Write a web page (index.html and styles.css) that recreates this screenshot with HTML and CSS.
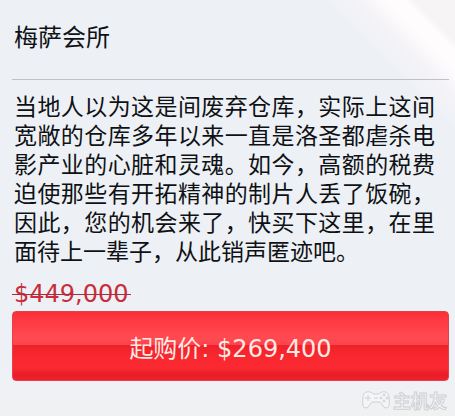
FILE: index.html
```html
<!DOCTYPE html>
<html lang="zh-CN">
<head>
<meta charset="utf-8">
<meta name="viewport" content="width=device-width, initial-scale=1">
<title>梅萨会所</title>
<link rel="stylesheet" href="styles.css">
</head>
<body>
<main class="listing">
  <h1 class="title">梅萨会所</h1>
  <p class="description">当地人以为这是间废弃仓库，实际上这间宽敞的仓库多年以来一直是洛圣都虐杀电影产业的心脏和灵魂。如今，高额的税费迫使那些有开拓精神的制片人丢了饭碗，因此，您的机会来了，快买下这里，在里面待上一辈子，从此销声匿迹吧。</p>
  <div class="old-price"><del>$449,000</del></div>
  <button class="buy" type="button">起购价: $269,400</button>
  <footer class="brand">
    <svg class="pad" viewBox="0 0 30 20" aria-hidden="true">
      <path d="M9 2C11 2 11 4 13 4H17C19 4 19 2 21 2C26 1 28 4 28 8C29 14 28 18 25 18C22 18 21 12 18 12H12C9 12 8 18 5 18C2 18 1 14 2 8C2 4 4 1 9 2Z"/>
      <path d="M7 5V11M4 8H10M13 8H17"/>
      <circle cx="23" cy="5" r="1"/><circle cx="23" cy="11" r="1"/><circle cx="20" cy="8" r="1"/><circle cx="26" cy="8" r="1"/>
    </svg>
    <span>主机友</span>
  </footer>
</main>
</body>
</html>
```
FILE: styles.css
```css
* {
  box-sizing: border-box;
}

body {
  margin: 0;
  min-height: 100vh;
  color: #101114;
  font-family: "Noto Sans CJK SC", sans-serif;
  background:
    linear-gradient(45deg, transparent 62%, #f5f3f7 72%, #fefcfd 79%, #fefcfd 85%, #f6f4f5 88%) top right / 170px 170px no-repeat,
    linear-gradient(#edf1f6 0%, #edf1f6 88%, #f1f1f2 100%);
}

.listing {
  padding: 0 6px 0 12px;
}

.title {
  margin: 0;
  padding: 18px 2px 25px;
  border-bottom: 1px solid #bfc1c6;
  font-size: 24px;
  font-weight: 400;
  line-height: 36px;
}

.description {
  margin: 0;
  padding: 11px 14px 12px 2px;
  font-size: 23px;
  line-height: 29px;
  text-align: justify;
}

.old-price {
  padding-left: 2px;
  color: #c92d3b;
  font-family: "DejaVu Sans", sans-serif;
  font-size: 24px;
  line-height: 34px;
}

.old-price del {
  position: relative;
  text-decoration: none;
}

.old-price del::after {
  content: "";
  position: absolute;
  top: 50%;
  left: -2px;
  right: -2px;
  height: 1px;
  background: #a5303c;
}

.buy {
  display: block;
  width: 100%;
  height: 70px;
  padding: 0;
  border: 1px solid #e8404a;
  border-radius: 4px;
  color: #ffe9e4;
  font-family: "DejaVu Sans", "Noto Sans CJK SC", sans-serif;
  font-size: 24px;
  background: linear-gradient(#f92f38 0%, #ff3841 12%, #ff4a52 38%, #fd444c 48%, #ee212a 49%, #f9282f 65%, #fb2a32 82%, #e91d27 92%, #ee222c 100%);
}

.brand {
  display: flex;
  justify-content: flex-end;
  align-items: center;
  gap: 2px;
  padding: 6px 2px 0 0;
  color: #f5f6f8;
  font-size: 18px;
  font-weight: 700;
  line-height: 26px;
  -webkit-text-stroke: 1px #cfd0d3;
}

.pad {
  width: 30px;
  height: 20px;
  fill: #f4f5f7;
  stroke: #cfd0d3;
  stroke-width: 1;
}
```
